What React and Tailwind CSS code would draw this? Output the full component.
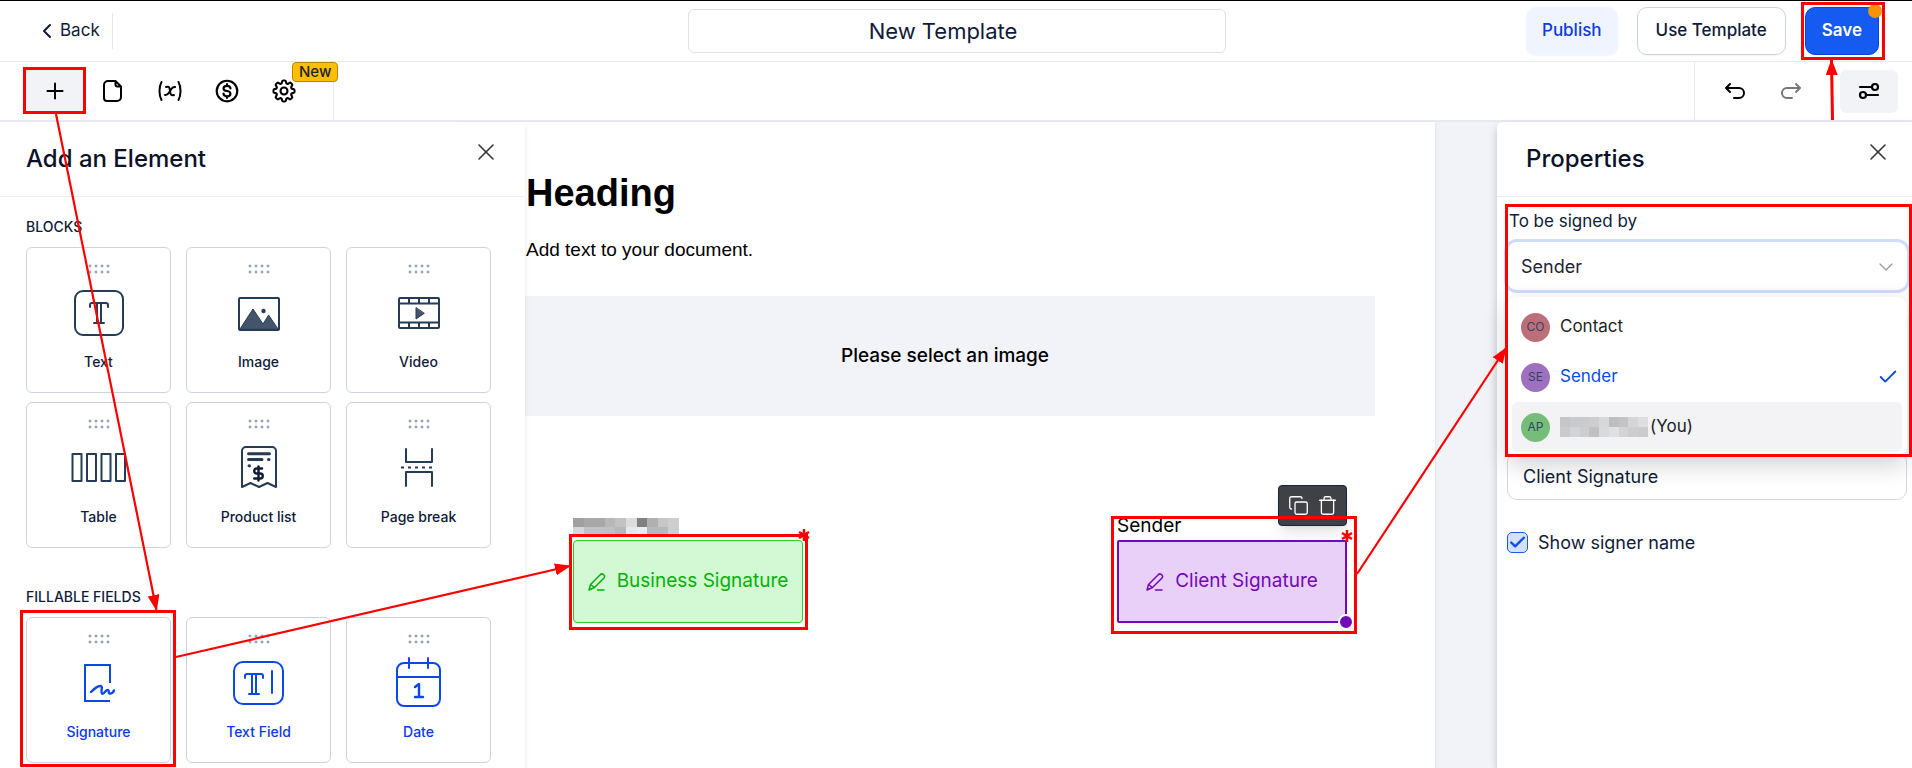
import { useState } from "react";
import { ChevronLeft, ChevronDown, Plus, X, Check, Copy, Trash, DollarSign } from "lucide-react";
import { HiOutlineCog8Tooth } from "react-icons/hi2";

const NAVY = "#263c56";
const BLUE = "#0a48ea";

function GlyphT({ x, y }) {
  return (
    <g transform={`translate(${x} ${y})`}>
      <path d="M1 5V3a2 2 0 0 1 2-2h14a2 2 0 0 1 2 2v2M8 1v20M12 1v20M5 21h10" />
    </g>
  );
}

function CardIcon({ name, color }) {
  return (
    <svg viewBox="0 0 56 56" className="h-14 w-14" fill="none" stroke={color} strokeWidth="2" strokeLinecap="round" strokeLinejoin="round" aria-hidden="true">
      {name === "text" && (
        <>
          <rect x="4" y="6" width="48" height="44" rx="8" />
          <GlyphT x={18} y={17} />
        </>
      )}
      {name === "image" && (
        <>
          <rect x="8" y="13" width="40" height="32" rx="1" />
          <path d="M9 44 22 24 32 39 37.600 30 47 44Z" fill="#44546a" strokeWidth="1" />
          <circle cx="32.500" cy="26" r="2.200" fill={color} stroke="none" />
        </>
      )}
      {name === "video" && (
        <>
          <rect x="8" y="13" width="40" height="30" rx="1" />
          <path d="M8 18.500h40M8 37.500h40M18 13v5M28 13v5M38 13v5M18 38v5M28 38v5M38 38v5" />
          <path d="M25 23v11l8-5.500z" fill="#44546a" strokeWidth="1" />
        </>
      )}
      {name === "table" && (
        <>
          <rect x="1.500" y="14" width="9" height="27" />
          <rect x="16" y="14" width="9" height="27" />
          <rect x="30.500" y="14" width="9" height="27" />
          <rect x="45" y="14" width="9" height="27" />
        </>
      )}
      {name === "product" && (
        <>
          <path d="M11 47V11a4 4 0 0 1 4-4h26a4 4 0 0 1 4 4v36l-8.500-4-8.500 4-8.500-4z" />
          <path d="M17.500 13.700h21M17.500 19.500h13.500M37.500 19.500h.5M18 25.800h.5" strokeWidth="3" />
          <DollarSign x="19" y="25" width="17" height="17" strokeWidth={3.400} />
        </>
      )}
      {name === "break" && (
        <>
          <path d="M15 9v13h26V9M15 46V32h26v14" />
          <path d="M10 27.500h33" strokeDasharray="3 4" strokeLinecap="butt" />
        </>
      )}
      {name === "signature" && (
        <>
          <path d="M39 28V10H14v36h25" strokeLinecap="butt" strokeLinejoin="miter" />
          <path d="M20 37c3-3 6-6 9-6 4 0 0 5 2 7.500 2 1.500 4-4.500 6-3.500s-.5 3 1.500 3.500 4-1.500 4.500-3" strokeWidth="2.400" />
        </>
      )}
      {name === "field" && (
        <>
          <rect x="3" y="7" width="49" height="42" rx="9" />
          <GlyphT x={13} y={18} />
          <path d="M41 16v22" />
        </>
      )}
      {name === "date" && (
        <>
          <rect x="6" y="8" width="43" height="43" rx="7" />
          <path d="M6 22h43M18 3v10M37 3v10" />
          <path d="M24 32l4-3v13M24 42h8" strokeWidth="2.400" />
        </>
      )}
    </svg>
  );
}

function ElementCard({ name, label, color, className }) {
  return (
    <button className={`flex h-[146px] flex-col items-center rounded-md border border-[#cdd2dd] bg-white pt-4 ${className}`}>
      <svg viewBox="0 0 22 10" className="h-[10px] w-[22px]" fill="none" stroke="#7a879d" aria-hidden="true">
        {[2, 8, 14, 20].map((x) => (
          <g key={x}>
            <circle cx={x} cy="2" r="1" />
            <circle cx={x} cy="8" r="1" />
          </g>
        ))}
      </svg>
      <span className="mt-[11px]">
        <CardIcon name={name} color={color} />
      </span>
      <span className="mt-[11px] text-sm font-medium">{label}</span>
    </button>
  );
}

const blocks = [
  { name: "text", label: "Text" },
  { name: "image", label: "Image" },
  { name: "video", label: "Video" },
  { name: "table", label: "Table" },
  { name: "product", label: "Product list" },
  { name: "break", label: "Page break" },
];

const fields = [
  { name: "signature", label: "Signature" },
  { name: "field", label: "Text Field" },
  { name: "date", label: "Date" },
];

function PanelHeader({ title, className }) {
  return (
    <div className={`flex h-[75px] shrink-0 items-start justify-between border-b border-[#ececf2] pt-4 ${className}`}>
      <h2 className="pt-[5px] text-2xl font-medium text-[#0b1228]">{title}</h2>
      <button aria-label={`Close ${title}`}>
        <X className="h-7 w-7 text-[#333]" strokeWidth={1.3} />
      </button>
    </div>
  );
}

function PenIcon() {
  return (
    <svg viewBox="0 0 18 18" className="h-[18px] w-[18px]" fill="none" stroke="currentColor" strokeWidth="1.500" strokeLinecap="round" strokeLinejoin="round" aria-hidden="true">
      <path d="M1 17l1.500-5.500L12 2a2.300 2.300 0 0 1 4 3L6.500 14.500zM2.500 11.500l4 3M9.500 17H16" />
    </svg>
  );
}

// Hidden names are drawn as rows of grey cells
function Mosaic({ cells, className }) {
  return (
    <span className={`grid overflow-hidden ${className}`} aria-hidden="true">
      {cells.map((c, i) => (
        <span key={i} style={{ backgroundColor: c }} />
      ))}
    </span>
  );
}

const businessCells = [
  "#a0a0a0", "#a8a8a8", "#a8a8a8", "#b8b8b8", "#c2c2c2", "#dcdcdc", "#808080", "#b0b0b0", "#c6c6c6", "#cecece",
  "#d6d6d6", "#c2c2c2", "#c2c2c2", "#c0c0c0", "#b8b8b8", "#e8e8e8", "#ececec", "#b8b8b8", "#b8b8b8", "#cecece",
];

const youCells = [
  "#c6c6c8", "#cacacc", "#cacacc", "#cdcdd0", "#d8d8da", "#bebec0", "#c3c3c5", "#d5d5d8", "#dedee0",
  "#cacacc", "#d3d4d9", "#cdcdd0", "#c0c0c3", "#d8d9dc", "#e0e0e3", "#d3d3d6", "#cdcdd0", "#cbcbcd",
];

function Asterisk() {
  return (
    <svg viewBox="0 0 12 12" className="absolute -top-3 -right-2 h-3 w-3" stroke="#ff0000" strokeWidth="2.500" aria-hidden="true">
      <path d="M6 0v12M1 3l10 6M11 3 1 9" />
    </svg>
  );
}

function Toolbar() {
  return (
    <div className="flex h-[60px] shrink-0 justify-between border-b-2 border-[#e9e9f0] text-black">
      <div className="flex items-center border-r border-[#e9e9f0] pr-[21px] pl-[26px]">
        <button aria-label="Add element" className="flex h-[44px] w-[58px] items-center justify-center bg-[#f2f3f7]">
          <Plus className="h-[26px] w-[26px]" strokeWidth={1.8} />
        </button>
        <button aria-label="Pages" className="flex w-[57px] justify-center">
          <svg viewBox="0 0 24 24" className="h-6 w-6" fill="none" stroke="currentColor" strokeWidth="2" strokeLinejoin="round">
            <path d="M14.500 2H7a4 4 0 0 0-4 4v13a3 3 0 0 0 3 3h10a4 4 0 0 0 4-4V7.500zM14.500 2v3.500a2 2 0 0 0 2 2H20" />
          </svg>
        </button>
        <button aria-label="Variables" className="flex w-[57px] justify-center">
          <svg viewBox="0 0 24 24" className="h-6 w-6" fill="none" stroke="currentColor" strokeWidth="2" strokeLinecap="round">
            <path d="M3.500 3c-2.700 5-2.700 13 0 18M20.500 3c2.700 5 2.700 13 0 18" />
            <path d="M8 8c3-1 3.500 0 4 4s1.500 5 4 4M17 8c-3-.5-3.500 2-5 4s-2 4.500-5 4" />
          </svg>
        </button>
        <button aria-label="Pricing" className="flex w-[57px] justify-center">
          <svg viewBox="0 0 24 24" className="h-[26px] w-[26px]" fill="none" stroke="currentColor" strokeWidth="2" strokeLinecap="round">
            <circle cx="12" cy="12" r="9.500" />
            <path d="M15.200 9.700c0-1.500-1.400-2.500-3.200-2.500s-3.200.9-3.200 2.400 1.400 2.100 3.200 2.400 3.200 1 3.200 2.500-1.400 2.400-3.200 2.400-3.200-1-3.200-2.500M12 5.700v1.500M12 16.900v1.500" />
          </svg>
        </button>
        <button aria-label="Settings" className="relative flex w-[57px] justify-center">
          <HiOutlineCog8Tooth className="h-7 w-7" strokeWidth={1.8} />
          <span className="absolute -top-[15px] left-[37px] rounded border border-[#b8860b] bg-[#ffbf00] px-1.5 text-[15px] leading-[18px] font-medium text-[#1b2430]">New</span>
        </button>
      </div>
      <div className="flex items-center border-l border-[#e9e9f0] pr-[14px] pl-[29px]">
        <button aria-label="Undo">
          <svg viewBox="0 0 22 18" className="h-[18px] w-[22px]" fill="none" stroke="#000" strokeWidth="2" strokeLinecap="round" strokeLinejoin="round">
            <path d="M6 2 2 6l4 4M2 6h13a5 5 0 0 1 0 10h-5" />
          </svg>
        </button>
        <button aria-label="Redo" className="ml-[34px]">
          <svg viewBox="0 0 22 18" className="h-[18px] w-[22px]" fill="none" stroke="#777" strokeWidth="2" strokeLinecap="round" strokeLinejoin="round">
            <path d="m16 2 4 4-4 4M20 6H7a5 5 0 0 0 0 10h5" />
          </svg>
        </button>
        <button aria-label="Properties" className="ml-[38px] flex h-[43px] w-[58px] items-center justify-center rounded-md bg-[#f2f3f7]">
          <svg viewBox="0 0 22 18" className="h-[18px] w-[22px]" fill="none" stroke="#000" strokeWidth="2.200" strokeLinecap="round">
            <path d="M2 5h11M9 13h11" />
            <circle cx="17" cy="5" r="3" />
            <circle cx="5" cy="13" r="3" />
          </svg>
        </button>
      </div>
    </div>
  );
}

function Option({ initials, avatar, children, className }) {
  return (
    <li role="option" aria-selected={initials === "SE"} className={`flex h-[50px] items-center rounded-md pr-[3px] pl-[9px] text-[17px] ${className}`}>
      <span className={`mr-[10px] flex h-[29px] w-[29px] items-center justify-center rounded-full text-xs text-[#2f4560] ${avatar}`}>{initials}</span>
      {children}
    </li>
  );
}

function Annotations() {
  return (
    <svg viewBox="0 0 1912 768" className="pointer-events-none absolute -top-px left-0 z-50 h-[768px] w-[1912px]" fill="none" stroke="#ff0000" strokeWidth="3" aria-hidden="true">
      <defs>
        <marker id="head" markerUnits="userSpaceOnUse" markerWidth="16" markerHeight="12" refX="15" refY="6" orient="auto">
          <path d="M0 0 16 6 0 12z" fill="#ff0000" stroke="none" />
        </marker>
      </defs>
      <rect x="24.500" y="68.500" width="60" height="44" />
      <rect x="21.500" y="611.500" width="153" height="154" />
      <rect x="570.500" y="535.500" width="236" height="93" />
      <rect x="1112.500" y="517.500" width="243" height="115" />
      <rect x="1506.500" y="205.500" width="404" height="250" />
      <rect x="1802.500" y="3.500" width="81" height="55" />
      <path d="M56 114 156.500 610" strokeWidth="2.200" markerEnd="url(#head)" />
      <path d="M176 657 570 566" strokeWidth="2.200" markerEnd="url(#head)" />
      <path d="M1357 574 1506 348" strokeWidth="2.200" markerEnd="url(#head)" />
      <path d="M1832.500 120 1831.500 60" markerEnd="url(#head)" />
    </svg>
  );
}

export default function App() {
  const [title, setTitle] = useState("New Template");
  const [signer, setSigner] = useState("Sender");
  const [label, setLabel] = useState("Client Signature");
  const [showName, setShowName] = useState(true);

  return (
    <div className="relative flex h-screen flex-col overflow-hidden border-t border-black bg-white font-['Inter',sans-serif] text-[#0f1b38]">
      {/* Top bar */}
      <header className="flex h-[61px] shrink-0 items-center border-b border-[#e9e9ee] pr-[33px] pl-[35px]">
        <div className="flex flex-1">
          <button className="flex h-9 items-center gap-px border-r border-[#e4e6ec] pr-3 text-[17px]">
            <ChevronLeft className="h-6 w-6" />
            Back
          </button>
        </div>
        <input
          aria-label="Template name"
          value={title}
          onChange={(e) => setTitle(e.target.value)}
          className="h-11 w-[538px] rounded-md border border-[#dfe0e6] pr-7 text-center text-[22px]"
        />
        <div className="flex flex-1 justify-end gap-[19px] text-[17px] font-medium">
          <button className="h-12 rounded-[10px] bg-[#f0f4ff] px-4 text-[#0a3be6] shadow-xs">Publish</button>
          <button className="h-12 rounded-[10px] border border-[#cdd2df] px-[18px] shadow-xs">Use Template</button>
          <button className="relative h-12 rounded-[10px] border border-[#0a41e0] bg-[#155bf2] px-4 font-semibold text-white">
            Save
            <span className="absolute -top-1 -right-1 h-[14px] w-[14px] rounded-full bg-[#f7920a]" />
          </button>
        </div>
      </header>

      <Toolbar />

      <main className="flex min-h-0 flex-1 bg-[#f2f3f8]">
        {/* Elements panel */}
        <aside className="z-20 w-[525px] shrink-0 overflow-hidden bg-white shadow-md">
          <PanelHeader title="Add an Element" className="pr-[25px] pl-[26px]" />
          <section className="px-[26px] pt-5">
            <h3 className="text-sm font-medium">BLOCKS</h3>
            <div className="mt-[10px] grid grid-cols-3 gap-x-[15px] gap-y-[9px] pr-2">
              {blocks.map((b) => (
                <ElementCard key={b.name} {...b} color={NAVY} className="" />
              ))}
            </div>
          </section>
          <section className="px-[26px] pt-[39px]">
            <h3 className="text-sm font-medium">FILLABLE FIELDS</h3>
            <div className="mt-[10px] grid grid-cols-3 gap-x-[15px] pr-2">
              {fields.map((f) => (
                <ElementCard key={f.name} {...f} color={BLUE} className="text-[#0a3aea]" />
              ))}
            </div>
          </section>
        </aside>

        {/* Document */}
        <div className="min-w-0 flex-1 pr-[62px]">
          <article className="-ml-[70px] h-full bg-white px-[60px] pt-[47px] shadow-sm">
            <h1 className="px-[11px] font-['Liberation_Sans',sans-serif] text-[38px] leading-[48px] font-bold text-black">Heading</h1>
            <p className="mt-[19px] px-[11px] font-['Liberation_Sans',sans-serif] text-[19px] leading-7 text-black">Add text to your document.</p>
            <div className="mt-8 flex h-[120px] items-center justify-center bg-[#f2f3f8] text-[19px] font-medium text-black">
              Please select an image
            </div>
            <div className="mt-24 flex items-end justify-between pr-7 pl-[58px]">
              <div className="w-[230px]">
                <Mosaic cells={businessCells} className="h-[18px] w-[106px] grid-cols-10" />
                <div className="relative mt-1 flex h-[83px] items-center justify-center gap-[11px] rounded-sm border border-[#2fca2f] bg-[#d2f9d4] text-[19px] text-[#08b008]">
                  <PenIcon />
                  Business Signature
                  <Asterisk />
                </div>
              </div>
              <div className="relative w-[230px]">
                <div className="absolute right-0 bottom-[97px] flex h-[41px] w-[69px] items-center justify-center gap-2 rounded-sm border border-[#14283c] bg-[#404147] text-white shadow-lg">
                  <button aria-label="Duplicate">
                    <Copy className="h-[21px] w-[21px]" strokeWidth={1.5} />
                  </button>
                  <button aria-label="Delete">
                    <Trash className="h-[21px] w-[21px]" strokeWidth={1.5} />
                  </button>
                </div>
                <p className="text-[19px] leading-7 text-black">Sender</p>
                <div className="relative flex h-[83px] items-center justify-center gap-[11px] rounded-xs border-2 border-[#7209b7] bg-[#e9d0f8] text-[19px] text-[#7209b7]">
                  <PenIcon />
                  Client Signature
                  <Asterisk />
                  <span className="absolute -right-[9px] -bottom-[9px] h-4 w-4 rounded-full border-2 border-white bg-[#7209b7] shadow" />
                </div>
              </div>
            </div>
          </article>
        </div>

        {/* Properties panel */}
        <aside className="z-20 w-[415px] shrink-0 rounded-tl-md bg-white shadow-[0_4px_8px_rgba(0,0,0,0.2)]">
          <PanelHeader title="Properties" className="pr-5 pl-[29px]" />
          <div className="relative pt-[11px] pr-[5px] pl-[10px]">
            <label htmlFor="signer" className="block pl-[2px] text-[17px] leading-[26px]">To be signed by</label>
            <div className="relative mt-2">
              <select
                id="signer"
                value={signer}
                onChange={(e) => setSigner(e.target.value)}
                className="h-[48px] w-full appearance-none rounded-[10px] bg-white pl-[14px] text-[18px] text-[#1d2330] ring-[3px] ring-[#cfdcfb]"
              >
                <option>Contact</option>
                <option>Sender</option>
              </select>
              <ChevronDown className="pointer-events-none absolute top-[13px] right-[9px] h-6 w-6 text-[#999]" strokeWidth={1.2} />
            </div>
            {/* Open signer menu */}
            <ul role="listbox" aria-label="Signers" className="absolute top-[100px] right-[5px] left-[10px] z-10 rounded-[10px] bg-white p-[5px] shadow-[0_8px_24px_rgba(0,0,0,0.18)]">
              <Option initials="CO" avatar="bg-[#bd6f79]" className="text-[#1d1f24]">Contact</Option>
              <Option initials="SE" avatar="bg-[#9f70bf]" className="text-[#0a4bf0]">
                Sender
                <Check className="ml-auto h-[22px] w-[22px]" strokeWidth={2} />
              </Option>
              <Option initials="AP" avatar="bg-[#76bd79]" className="bg-[#f3f3f5] text-[#1d1f24]">
                <Mosaic cells={youCells} className="mr-0.5 h-5 w-[88px] grid-cols-9" />
                (You)
              </Option>
            </ul>
            <input
              aria-label="Field label"
              value={label}
              onChange={(e) => setLabel(e.target.value)}
              className="mt-[162px] h-[48px] w-full rounded-[10px] border border-[#d5d8e0] pl-[15px] text-[18px]"
            />
            <div className="mt-[29px] flex items-center text-[18px]">
              <span className="relative h-[21px] w-[21px]">
                <input
                  id="show-name"
                  type="checkbox"
                  checked={showName}
                  onChange={(e) => setShowName(e.target.checked)}
                  className="block h-[21px] w-[21px] appearance-none rounded-[5px] border border-[#155bf2] bg-[#d5e1fc]"
                />
                {showName && <Check className="pointer-events-none absolute top-px left-px h-[19px] w-[19px] text-[#0a4bf0]" strokeWidth={3} />}
              </span>
              <label htmlFor="show-name" className="pl-[10px]">Show signer name</label>
            </div>
          </div>
        </aside>
      </main>

      <Annotations />
    </div>
  );
}
